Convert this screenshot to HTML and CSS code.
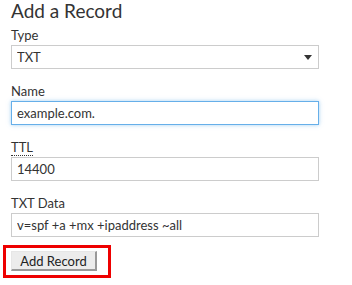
FILE: index.html
```html
<!DOCTYPE html>
<html lang="en">
<head>
  <meta charset="UTF-8">
  <title>Add a Record</title>
  <link rel="stylesheet" href="styles.css">
</head>
<body>
  <h2>Add a Record</h2>
  <form class="record-form">
    <div class="field">
      <label for="type">Type</label>
      <div class="select-wrap">
        <select id="type">
          <option>TXT</option>
        </select>
        <span class="arrow"></span>
      </div>
    </div>

    <div class="field">
      <label for="name">Name</label>
      <input type="text" id="name" class="focused" value="example.com.">
    </div>

    <div class="field">
      <label for="ttl"><abbr title="Time To Live">TTL</abbr></label>
      <input type="text" id="ttl" value="14400">
    </div>

    <div class="field">
      <label for="txtdata">TXT Data</label>
      <input type="text" id="txtdata" value="v=spf +a +mx +ipaddress ~all">
    </div>

    <div class="actions">
      <button type="button">Add Record</button>
    </div>
  </form>
</body>
</html>
```

FILE: styles.css
```css
body {
  margin: 0;
  padding: 0 0 0 11px;
  font-family: Lato, 'Open Sans', sans-serif;
  font-size: 13px;
  color: #333;
  background: #fff;
}
h2 {
  margin: 0;
  font-size: 19px;
  font-weight: 400;
  line-height: 22px;
  color: #333;
}
.record-form {
  width: 308px;
  margin-top: 5px;
}
.field {
  margin-bottom: 14px;
}
label {
  display: block;
  line-height: 16px;
  margin-bottom: 2px;
}
abbr {
  text-decoration: none;
  border-bottom: 1px dotted #333;
}
input, select {
  display: block;
  box-sizing: border-box;
  width: 308px;
  height: 24px;
  font-family: inherit;
  font-size: 13px;
  color: #333;
  border: 1px solid #ccc;
  background: #fff;
  padding: 0 5px;
  margin: 0;
  outline: none;
}
select {
  appearance: none;
  -webkit-appearance: none;
  border-radius: 0;
}
.select-wrap {
  position: relative;
}
.arrow {
  position: absolute;
  right: 7px;
  top: 10px;
  width: 0;
  height: 0;
  border-left: 4px solid transparent;
  border-right: 4px solid transparent;
  border-top: 5px solid #333;
}
input.focused {
  border-color: #66afe9;
  box-shadow: 0 0 4px rgba(102, 175, 233, 0.6);
}
.actions {
  display: inline-block;
  margin-left: -8px;
  margin-top: -6px;
  padding: 3px 11px 4px 5px;
  border: 3px solid #e00;
}
button {
  display: block;
  box-sizing: border-box;
  width: 86px;
  height: 20px;
  font-family: inherit;
  font-size: 13px;
  color: #222;
  background: #ececec;
  border: 1px solid #e6e6e6;
  border-right: 2px solid #999;
  border-bottom: 2px solid #999;
  padding: 0;
  line-height: 16px;
  border-radius: 0;
}
```
